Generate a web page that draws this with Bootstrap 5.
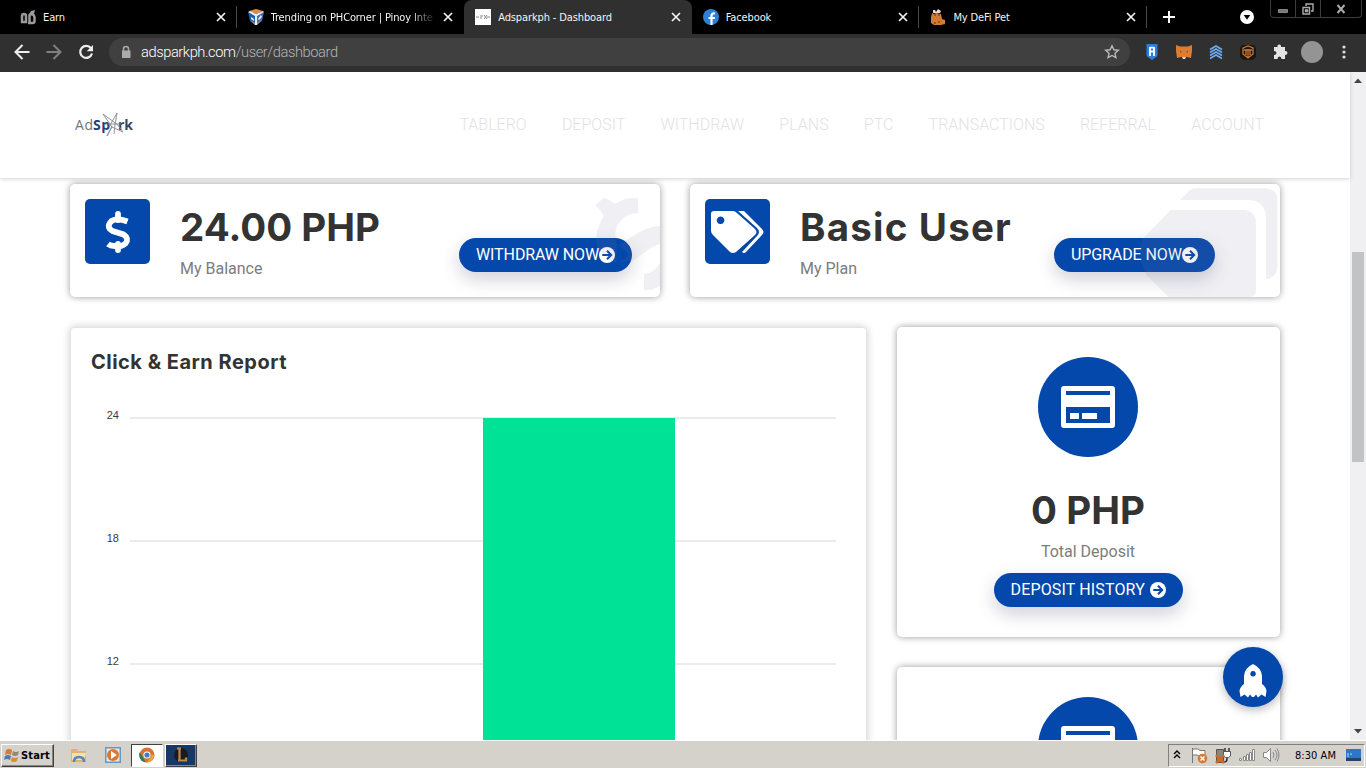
<!DOCTYPE html>
<html lang="en">
<head>
  <meta charset="UTF-8">
  <title>Adsparkph - Dashboard</title>
  <link href="https://cdn.jsdelivr.net/npm/bootstrap@5.3.0/dist/css/bootstrap.min.css" rel="stylesheet">
  <style>
    body { width: 1366px; height: 768px; font-family: Roboto, "Liberation Sans", sans-serif; background: #fff; }
    svg { display: block; flex: none; }

    /* browser chrome */
    .tab-strip { height: 34px; background: #000; padding-left: 9px; font: 11px/34px "DejaVu Sans Condensed", "DejaVu Sans", sans-serif; letter-spacing: -.12px; color: #f4f4f4; }
    .chrome-tab { width: 227.6px; flex: none; padding: 0 10px 0 11px; gap: 7px; border-right: 1px solid transparent; }
    .chrome-tab.divided { border-image: linear-gradient(#000 7px, #4a4a4a 7px, #4a4a4a 27px, #000 27px) 1; border-width: 0 1px 0 0; border-style: solid; }
    .chrome-tab.current { background: #303030; border-radius: 8px 8px 0 0; }
    .tab-label { white-space: nowrap; flex: 1; padding-top: 1px; }
    .tab-label.faded { -webkit-mask-image: linear-gradient(90deg, #000 84%, transparent); }
    .window-btns { width: 92px; height: 18px; border: 1px solid #3c3c3c; border-top: 0; border-radius: 0 0 4px 4px; }
    .window-btns > span { border-right: 1px solid #3c3c3c; display: flex; align-items: center; justify-content: center; }
    .window-btns > span:last-child { border: 0; }
    .tool-row { height: 38px; background: #303030; padding: 0 15px 2px 14px; }
    .omnibox { width: 1021px; height: 28px; border-radius: 14px; background: #404040; margin: 0 14px 0 15px; padding: 0 10px 0 9px; font-size: 14.7px; font-weight: 300; letter-spacing: -.43px; color: #fff; }
    .omnibox .path { color: #b4b4b4; }
    .avatar { width: 22px; height: 22px; background: #949494; }

    /* page */
    .viewport { height: 668px; }
    .page { width: 1350px; }
    .scroll-track { width: 16px; background: #f0f0f3; }
    .scroll-thumb { width: 12px; height: 210px; background: #c1c3c4; margin-top: 163px; }
    .site-header { height: 106px; flex: none; padding: 0 86px 0 75px; background: #fff; box-shadow: 0 1px 4px rgba(0,0,0,.18); z-index: 2; }
    .site-nav { gap: 35.200px; font-size: 16px; font-weight: 300; color: #e2e2e6; }
    .panel { background: #fff; border-radius: 5px; box-shadow: 0 0 7px rgba(0,0,0,.4); }
    .stat { width: 590px; height: 113px; padding: 15px; overflow: hidden; }
    .stat-icon { width: 65px; height: 65px; border-radius: 5px; background: #0448ab; }
    .display-text { font-family: Inter, "Open Sans", sans-serif; font-weight: 700; color: #333; font-size: 38.500px; line-height: 56px; white-space: nowrap; }
    .caption-text { font-size: 16px; line-height: 24px; padding-top: 2px; color: #7c7c7c; }
    .pill { height: 34px; border-radius: 17px; background: #0448ab; color: #fff; font-size: 16px; font-weight: 400; padding: 0 17px; box-shadow: 0 7px 18px rgba(20,20,60,.2); white-space: nowrap; border: 0; }
    .pill.withdraw { margin: 39px 13px 0 auto; width: 173px; letter-spacing: -.1px; }
    .pill.upgrade { margin: 39px 50px 0 auto; width: 161px; letter-spacing: -.1px; }
    .pill.history { width: 189px; margin-top: 9px; letter-spacing: .15px; }
    .ghost { top: 0; right: 0; fill: rgba(125,125,160,.115); }
    .report { width: 797px; height: 480px; padding: 20px 0 0 20px; border-radius: 4px; border: 1px solid #e4e4e4; box-shadow: 0 0 9px rgba(0,0,0,.2); }
    .report h4 { font-size: 20px; line-height: 28px; margin: 0; }
    .deposit { width: 383px; height: 310px; padding: 30px 1px 0 0; flex: none; }
    .round-icon { width: 100px; height: 100px; background: #0448ab; margin-bottom: 25px; }
    .side { gap: 30px; }
    .to-top { right: 83px; bottom: 33px; width: 60px; height: 60px; background: #0448ab; box-shadow: 0 3px 10px rgba(0,0,0,.28); z-index: 3; }

    /* taskbar */
    .taskbar { height: 28px; background: #d5d2cc; border-top: 1px solid #fff; font: 11px "DejaVu Sans Condensed", sans-serif; color: #000; padding: 1px 1px 0 1px; }
    .raised { border: 1px solid; border-color: #fff #404040 #404040 #fff; box-shadow: inset -1px -1px #858585; }
    .start-btn { width: 53px; height: 23px; font-weight: bold; padding-left: 2px; gap: 1px; }
    .task-btn { width: 32px; height: 23px; }
    .task-btn.pressed { background: #fff; border: 1px solid; border-color: #404040 #fff #fff #404040; }
    .task-btn.game { background: #173865; margin-left: 2px; }
    .tray { width: 197px; height: 23px; border: 1px solid; border-color: #808080 #fff #fff #808080; }
  </style>
</head>
<body class="d-flex flex-column overflow-hidden">

  <!-- shared symbols -->
  <svg class="d-none">
    <symbol id="close" viewBox="0 0 10 10"><path d="M1 1l8 8M9 1l-8 8" stroke="#f4f4f4" stroke-width="1.7"/></symbol>
    <symbol id="arrow" viewBox="0 0 16 16"><circle cx="8" cy="8" r="8" fill="#fff"/><path d="M3.3 8h8.5M8 3.8L12.2 8 8 12.2" fill="none" stroke="#0448ab" stroke-width="2"/></symbol>
    <symbol id="credit" viewBox="0 0 54 42"><path fill="#fff" fill-rule="evenodd" d="M3 0h48q3 0 3 3v36q0 3-3 3H3q-3 0-3-3V3q0-3 3-3zM5 5v4h44V5zM5 21v16h44V21z"/><path fill="#fff" d="M9 27h9v6H9zM21 27h15v6H21z"/></symbol>
  </svg>

  <div class="tab-strip d-flex flex-shrink-0">
    <div class="chrome-tab divided d-flex align-items-center">
      <svg width="16" height="16" fill="none" stroke="#9a9a9a" stroke-width="2.500"><path d="M2 14V7q0-2 2-2t2 2v7M1 13h6M9.500 14V6q4-2 5 2v4q0 2-2 2H8"/><path d="M9 5l2-3 4-1-1 4z" fill="#9a9a9a" stroke="none"/></svg>
      <span class="tab-label">Earn</span>
      <svg width="10" height="10"><use href="#close"/></svg>
    </div>
    <div class="chrome-tab d-flex align-items-center">
      <svg width="16" height="16"><path fill="#1c5cac" d="M0 3l7 3v10l-5-4z"/><path fill="#3972b8" d="M16 3L8 6v10l6-4z"/><path fill="#e08a3e" d="M1 2l7-2 7 2-7 3z"/><path fill="#e9edf2" d="M0 3l2-1 6 3 7-3 1 1-7 4v9H7V7z"/><path fill="#f3e8de" d="M3 8l3 2v2L3 10zM13 6l1 2-3 3-1-1z"/><path fill="#d6813f" d="M2 11l5 3v2zM14 11l-5 3v2z"/></svg>
      <span class="tab-label faded">Trending on PHCorner | Pinoy Inte</span>
      <svg width="10" height="10"><use href="#close"/></svg>
    </div>
    <div class="chrome-tab current d-flex align-items-center">
      <svg width="16" height="16"><path fill="#fff" d="M0 0h16v16H0z"/><path d="M1 8h3M5 7h3M5 9h2M9 6l3 4M12 6l-3 4M12 8h3" stroke="#888"/></svg>
      <span class="tab-label">Adsparkph - Dashboard</span>
      <svg width="10" height="10"><use href="#close"/></svg>
    </div>
    <div class="chrome-tab divided d-flex align-items-center">
      <svg width="16" height="16"><circle cx="8" cy="8" r="8" fill="#2f7fd4"/><path d="M8.500 16V7q0-3 3.500-2.500M5.500 9H12" fill="none" stroke="#fff" stroke-width="2.200"/></svg>
      <span class="tab-label">Facebook</span>
      <svg width="10" height="10"><use href="#close"/></svg>
    </div>
    <div class="chrome-tab divided d-flex align-items-center">
      <svg width="16" height="16"><path fill="#d27a34" d="M2 4l2 1 2-1 5 1 1 5 3 1v4l-4 1H4l-3-2V8z"/><path fill="#ddd" d="M3 1h2l1 2 2-3 3 2-1 2H3z"/><path stroke="#5b2f12" d="M4 6h2M8 6h2M5 13v2M9 12v2"/></svg>
      <span class="tab-label">My DeFi Pet</span>
      <svg width="10" height="10"><use href="#close"/></svg>
    </div>
    <div class="d-flex align-items-center ms-3"><svg width="12" height="12"><path d="M6 0v12M0 6h12" stroke="#fff" stroke-width="2"/></svg></div>
    <div class="d-flex align-items-center ms-auto me-3"><svg width="14" height="14"><circle cx="7" cy="7" r="7" fill="#fff"/><path d="M3.7 5h6.6L7 9.8z"/></svg></div>
    <div class="window-btns d-flex me-1">
      <span style="width:25px"><svg width="10" height="10"><path fill="#777" stroke="#bbb" stroke-width=".6" d="M.5 5.500h9v3h-9z"/></svg></span>
      <span style="width:25px"><svg width="12" height="12" fill="none" stroke="#aaa" stroke-width="1.400"><path d="M1 4.500h6.500V11H1zM3.500 7h2v1.500h-2zM4 3V1h7v7H9"/></svg></span>
      <span class="flex-fill"><svg width="10" height="10"><path d="M1.500 1l7 8M8.500 1l-7 8" stroke="#aaa" stroke-width="2"/></svg></span>
    </div>
  </div>

  <div class="tool-row d-flex align-items-center flex-shrink-0">
    <svg width="16" height="16" fill="none" stroke="#eee" stroke-width="2"><path d="M15.500 8H2M8.500 1L1.500 8l7 7"/></svg>
    <svg class="ms-3" width="16" height="16" fill="none" stroke="#808080" stroke-width="2"><path d="M.5 8H14M7.500 1l7 7-7 7"/></svg>
    <svg class="ms-3" width="16" height="16"><path d="M13 4.200A6 6 0 1 0 14 9.500" fill="none" stroke="#eee" stroke-width="2.200"/><path fill="#eee" d="M15 1v6.300H8.700z"/></svg>
    <div class="omnibox d-flex align-items-center">
      <svg width="16" height="16"><path d="M5.500 7V5q0-2.500 2.500-2.500T10.500 5v2" fill="none" stroke="#aaa" stroke-width="1.500"/><path fill="#aaa" d="M4 6.500h8.500V14H4z"/></svg>
      <span style="margin-left:7px">adsparkph.com<span class="path">/user/dashboard</span></span>
      <svg class="ms-auto" width="16" height="16"><path d="M8 1.800l1.900 4 4.400.5-3.300 3 .9 4.400L8 11.500l-3.900 2.200.9-4.400-3.300-3 4.400-.5z" fill="none" stroke="#bbb" stroke-width="1.400"/></svg>
    </div>
    <svg width="16" height="16"><path fill="#2b7de0" d="M2.500 0h11v12L8 16l-5.500-4z"/><path d="M6 3v9M10 3v9M6 3.700h4M6 7.500h4" stroke="#fff" stroke-width="1.800"/></svg>
    <svg class="ms-3" width="16" height="16"><path fill="#dc7d33" d="M0 1l4 1.500h8L16 1v6l-1 7-4-1H5l-4 1-1-7z"/><path fill="#ddd" d="M6 13h4l-1 2H7z"/><path fill="#7b3b10" d="M4 7l2 1-2 .5zM12 7l-2 1 2 .5z"/></svg>
    <svg class="ms-3" width="16" height="16" fill="none" stroke="#6cabf2" stroke-width="1.700"><path d="M2 5.500L8 2l6 3.500M2 8.500L8 5l6 3.500M2 11.500L8 8l6 3.500M2 14.500L8 11l6 3.500"/></svg>
    <svg class="ms-3" width="16" height="16"><path fill="#1d1712" d="M2 1h12l2 3v9l-3 3H3l-3-3V4z"/><path d="M3 4l5-2 5 2v6l-5 4-5-4zM4 6h8M6 6v5M10 6v5M8 5v8" fill="none" stroke="#c87533" stroke-width="1.300"/></svg>
    <svg class="ms-3" width="16" height="16"><path fill="#e4e4e4" d="M2 3h3.500q-.5-2.500 1.700-2.500T9 3h4v4q2.500-.2 2.500 1.900T13 11v4H9.500q0-2.500-2-2.500t-2 2.500H2v-4q2.500 0 2.500-2T2 7z"/></svg>
    <div class="avatar rounded-circle" style="margin-left:13px"></div>
    <svg style="margin-left:19px" width="4" height="16" fill="#ddd"><circle cx="2" cy="3" r="1.600"/><circle cx="2" cy="8" r="1.600"/><circle cx="2" cy="13" r="1.600"/></svg>
  </div>

  <div class="viewport d-flex flex-shrink-0 position-relative overflow-hidden">
    <div class="page d-flex flex-column">
      <header class="site-header d-flex align-items-center justify-content-between">
        <svg width="60" height="30" font-family="Open Sans, sans-serif" font-size="14">
          <text x="0" y="19.500" fill="#70757f" textLength="18" font-weight="400">Ad</text>
          <text x="18" y="19.500" fill="#1f3f80" textLength="17" font-weight="700">Sp</text>
          <text x="43" y="19.500" fill="#34465f" textLength="15" font-weight="700">rk</text>
          <path d="M28 4l15 11 5 7-11-5-5 9 5-10M34 17l8-14-2 12-1 9M28 4l9 13M30 14h16" fill="none" stroke="#858990" stroke-width=".9"/>
        </svg>
        <nav class="site-nav d-flex">
          <span>TABLERO</span><span>DEPOSIT</span><span>WITHDRAW</span><span>PLANS</span><span>PTC</span><span>TRANSACTIONS</span><span>REFERRAL</span><span>ACCOUNT</span>
        </nav>
      </header>

      <main style="margin:6px 70px 0">
        <div class="d-flex justify-content-between">
          <div class="panel stat d-flex align-items-start position-relative">
            <div class="stat-icon d-flex align-items-center justify-content-center">
              <svg width="26" height="42" fill="none" stroke="#fff" stroke-width="5.800"><path d="M13 3v6M13 33v6" stroke-linecap="round"/><path d="M22.500 10.500Q12 6.500 6.500 10q-6 6 1 10l11 3.500q6 4 2 9-5 4-11 2.500-4 0-6.500-2"/></svg>
            </div>
            <div style="margin-left:30px">
              <div class="display-text"><span id="balance">24.00 PHP</span></div>
              <div class="caption-text">My Balance</div>
            </div>
            <button class="pill withdraw d-flex align-items-center">WITHDRAW NOW<svg class="ms-auto" width="16" height="16"><use href="#arrow"/></svg></button>
            <svg class="ghost position-absolute" width="70" height="113" viewBox="630 42 210 339">
              <path d="M645 106l27-23q18 5 34 19 18-14 35-16 20-3 33-1v44q-24 1-40 13-20 14-25 32-5 16 0 46l35 30q0 20-40 30l-50-40q-12-40 5-78 5-14 13-23-10-20-27-33zM840 168q-45 4-80 30l-50 30v50l45-5q25-14 45-30 20-16 40-22zM792 312q33-4 48-34v70q-20 12-48 14z"/>
            </svg>
          </div>
          <div class="panel stat d-flex align-items-start position-relative">
            <div class="stat-icon d-flex align-items-center justify-content-center">
              <svg width="53" height="42" style="margin-right:1px"><path fill="#fff" fill-rule="evenodd" d="M3 0h19q2 0 4 2l18 16q3 3 0 6L25 41q-3 2-6 0L2 24q-2-2-2-4V3q0-3 3-3zM9.500 5.500a3.800 3.800 0 1 0 .1 0z"/><path fill="#fff" d="M27 0h6l18 18q3 3 0 6L35 41q-2 2-4 0l15-16q4-4 0-8z"/></svg>
            </div>
            <div style="margin-left:30px">
              <div class="display-text"><span id="plan">Basic User</span></div>
              <div class="caption-text">My Plan</div>
            </div>
            <button class="pill upgrade d-flex align-items-center">UPGRADE NOW<svg class="ms-auto" width="16" height="16"><use href="#arrow"/></svg></button>
            <svg class="ghost position-absolute" width="140" height="113" viewBox="390 252 420 339">
              <path d="M510 300l25-25q10-10 25-10h207q35 2 35 35v200q-2 35-34 37V350q-5-50-55-50zM482 330h218q38 2 38 40v200q-1 18-18 21H475l-65-65q-34-68-10-112z"/>
            </svg>
          </div>
        </div>

        <div class="d-flex justify-content-between" style="margin-top:30px">
          <div class="panel report">
            <h4 class="display-text"><span id="report">Click &amp; Earn Report</span></h4>
            <svg id="chart" width="760" height="400" font-family="Liberation Sans, sans-serif" font-size="11"></svg>
          </div>
          <div class="side d-flex flex-column">
            <div class="panel deposit d-flex flex-column align-items-center">
              <div class="round-icon rounded-circle d-flex align-items-center justify-content-center"><svg width="54" height="42"><use href="#credit"/></svg></div>
              <div class="display-text"><span id="deposit">0 PHP</span></div>
              <div class="caption-text">Total Deposit</div>
              <button class="pill history d-flex align-items-center">DEPOSIT HISTORY<svg class="ms-auto" width="16" height="16"><use href="#arrow"/></svg></button>
            </div>
            <div class="panel deposit d-flex flex-column align-items-center">
              <div class="round-icon rounded-circle d-flex align-items-center justify-content-center"><svg width="54" height="42"><use href="#credit"/></svg></div>
            </div>
          </div>
        </div>
      </main>
    </div>

    <div class="scroll-track d-flex flex-column align-items-center">
      <svg width="10" height="17"><path fill="#444" d="M1 11l4-4.500L9 11z"/></svg>
      <div class="scroll-thumb"></div>
      <svg class="mt-auto" width="10" height="17"><path fill="#444" d="M1 6l4 4.500L9 6z"/></svg>
    </div>

    <div class="to-top position-absolute rounded-circle d-flex align-items-center justify-content-center">
      <svg width="28" height="34" style="margin-top:7px"><path fill="#fff" fill-rule="evenodd" d="M14 0q8.500 4 9 12v8q4 3 4.500 7l-1 6-4-2.500-3.500 3-2-3-2 2.500h-2l-2-2.500-2 3-3.500-3-4 2.500-1-6q.5-4 4.500-7v-8q.5-8 9-12zM14 7a2.800 2.800 0 1 0 .1 0z"/></svg>
    </div>
  </div>

  <div class="taskbar d-flex align-items-center flex-shrink-0">
    <div class="start-btn raised d-flex align-items-center">
      <svg width="16" height="16"><path fill="#d87b33" d="M2 3q3-2 6 0L7 8q-3-2-6 0z"/><path fill="#8c8d72" d="M9 4q3 2 6 0l-1 4q-3 2-6 0z"/><path fill="#4d79b5" d="M1 9q3-2 6 0l-1 4q-3-2-6 0z"/><path fill="#d98a3b" d="M8 10q3 2 6 0l-1 4q-3 2-6 0z"/></svg>
      <span id="start">Start</span>
    </div>
    <svg width="16" height="16" style="margin-left:17px"><path fill="#e7b168" d="M0 2h6l1 2h8v11H0z"/><path fill="#f6dfb5" d="M1 6h14l-2 7H1z"/><path d="M3 15q0-5 5-5t5 5" fill="none" stroke="#4c8ac4" stroke-width="2.500"/></svg>
    <svg width="16" height="16" style="margin:0 10px 0 18px"><path fill="#5b9bd0" d="M0 0h16v16H0z"/><path fill="#f2e5d8" d="M1.500 1.500h13v13h-13z"/><circle cx="8" cy="8" r="6" fill="#d9782e"/><path fill="#fff" d="M6 4l6 4-6 4z"/></svg>
    <div class="task-btn pressed d-flex align-items-center justify-content-center">
      <svg width="16" height="16"><circle cx="8" cy="8" r="7.500" fill="#d8742d"/><path fill="#287d61" d="M.8 5l6 10.400A7.500 7.500 0 0 1 .8 5z"/><path fill="#e3a53c" d="M8 15.500L13 8h2.500A7.500 7.500 0 0 1 8 15.500z"/><circle cx="8" cy="8" r="3.600" fill="#fff"/><circle cx="8" cy="8" r="2.600" fill="#3c80c5"/></svg>
    </div>
    <div class="task-btn game raised d-flex align-items-center justify-content-center">
      <svg width="18" height="18"><circle cx="9" cy="9" r="7" fill="#181c20"/><path d="M5 2.500h4M7.500 2v13M6 14.500h8v-3" fill="none" stroke="#c68742" stroke-width="2.200"/></svg>
    </div>
    <div class="tray d-flex align-items-center ms-auto">
      <svg width="8" height="12" style="margin-left:4px" fill="none" stroke="#000" stroke-width="1.400"><path d="M1 5l3-3 3 3M1 9l3-3 3 3"/></svg>
      <svg width="17" height="17" style="margin-left:10px"><path d="M1.500 1v15M2 2h5l2 1.500h5V9H8L6 8H2" fill="#fff" stroke="#777"/><circle cx="11.500" cy="11.500" r="4.800" fill="#d57b35"/><path d="M9.500 9.500l4 4M13.500 9.500l-4 4" stroke="#fff" stroke-width="1.500"/></svg>
      <svg width="17" height="17" style="margin-left:7px"><path fill="#8a8780" stroke="#555" d="M1.500 2.500h7v13h-7z"/><path d="M10 1v4M14 1v4M12 9v3q0 3-3 3" stroke="#333" stroke-width="1.500" fill="none"/><path fill="#fff" stroke="#555" d="M8.500 4.500h7V9l-2 1.500h-3L8.500 9z"/><path d="M1 8l8 8M9 8l-8 8" stroke="#cc6b26" stroke-width="2.500"/></svg>
      <svg width="17" height="14" style="margin-left:7px" fill="#fff" stroke="#888"><path d="M.5 10.500h2v2h-2zM4.500 8.500h2v4h-2zM7.500 6.500h2v6h-2zM10.500 4.500h2v8h-2zM13.500 1.500h2v11h-2z"/></svg>
      <svg width="17" height="16" style="margin-left:7px" fill="none" stroke="#888"><path fill="#fff" d="M.5 5.500h3l4-4v13l-4-4h-3z"/><path d="M10 5q2 3 0 6M12 3q4 5 0 10M14 1.500q4 6.500 0 13"/></svg>
      <span style="margin-left:15px;white-space:nowrap" id="clock">8:30 AM</span>
      <svg width="16" height="13" style="margin-left:10px"><path fill="#2f76c6" d="M0 0h15v10H0z"/><path fill="#24426c" d="M0 9h15v3H0z"/><path d="M2 4v4M4 5h2" stroke="#bcd8f5"/></svg>
    </div>
  </div>

  <script src="https://cdn.jsdelivr.net/npm/bootstrap@5.3.0/dist/js/bootstrap.bundle.min.js"></script>
  <script>
    // bar chart: one gridline per step of 6
    let chart = document.getElementById("chart");
    let earned = 24;
    let stepHeight = 123;
    let top0 = 42;
    let marks = "";
    [24, 18, 12].forEach((value, i) => {
      let y = top0 + i * stepHeight;
      marks += `<path d="M39 ${y}h706" stroke="#ebebeb" stroke-width="2"/>
        <text x="28" y="${y + 1}" text-anchor="end" fill="#373d3f">${value}</text>`;
    });
    marks += `<rect x="392" y="${top0}" width="192" height="${earned / 6 * stepHeight}" fill="#00e396"/>`;
    chart.innerHTML = marks;

    // spread headings to a fixed measure
    let fitWidth = (id, width) => {
      let el = document.getElementById(id);
      let natural = el.getBoundingClientRect().width;
      el.style.letterSpacing = (width - natural) / el.textContent.length + "px";
    };
    fitWidth("balance", 200);
    fitWidth("plan", 212);
    fitWidth("report", 196);
    fitWidth("deposit", 114);
    fitWidth("start", 29);
    fitWidth("clock", 41);
  </script>
</body>
</html>
